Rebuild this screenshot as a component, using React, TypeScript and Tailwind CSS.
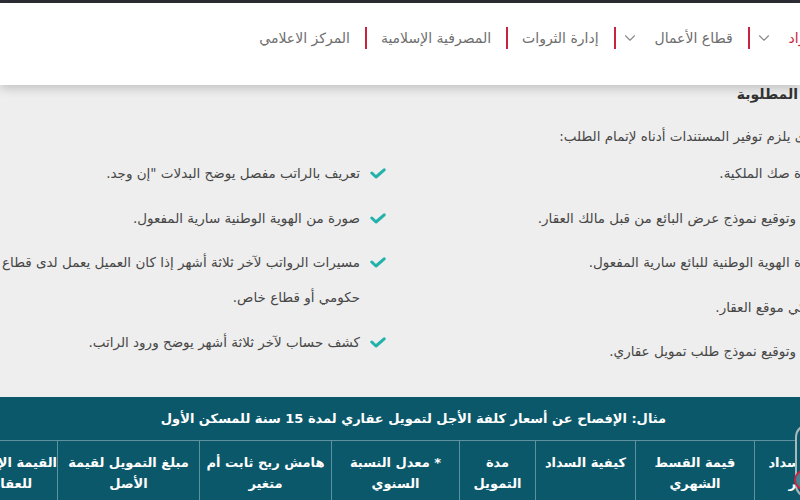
import React from 'react';
import { ChevronDown } from 'lucide-react';

const rightDocs = [
  'صورة صك الملكية.',
  'تعبئة وتوقيع نموذج عرض البائع من قبل مالك العقار.',
  'صورة الهوية الوطنية للبائع سارية المفعول.',
  'كروكي موقع العقار.',
  'تعبئة وتوقيع نموذج طلب تمويل عقاري.',
];

const leftDocs: string[][] = [
  ['تعريف بالراتب مفصل يوضح البدلات "إن وجد.'],
  ['صورة من الهوية الوطنية سارية المفعول.'],
  ['مسيرات الرواتب لآخر ثلاثة أشهر إذا كان العميل يعمل لدى قطاع', 'حكومي أو قطاع خاص.'],
  ['كشف حساب لآخر ثلاثة أشهر يوضح ورود الراتب.'],
];

const columns = [
  { title: ['تاريخ السداد', 'الأخير'], width: 'w-[105px]' },
  { title: ['قيمة القسط', 'الشهري'], width: 'w-[119px]' },
  { title: ['كيفية السداد'], width: 'w-[100px]' },
  { title: ['مدة', 'التمويل'], width: 'w-[76px]' },
  { title: ['* معدل النسبة', 'السنوي'], width: 'w-[128px]' },
  { title: ['هامش ربح ثابت أم', 'متغير'], width: 'w-[132px]' },
  { title: ['مبلغ التمويل لقيمة', 'الأصل'], width: 'w-[142px]' },
  { title: ['القيمة الإجمالية', 'للعقار'], width: 'w-[90px]' },
];

const CheckMark = () => (
  <svg width="16" height="11" viewBox="0 0 16 11" className="shrink-0 mt-[12px]">
    <polyline
      points="1.8,5 6,9 14.2,1.8"
      fill="none"
      stroke="#23b1ab"
      strokeWidth="3"
      strokeLinecap="round"
      strokeLinejoin="round"
    />
  </svg>
);

const Divider = ({ afterChevron }: { afterChevron?: boolean }) => (
  <span className={`w-[2px] h-[22px] bg-[#c9243f] ml-[15px] ${afterChevron ? 'mr-[5px]' : 'mr-[14px]'}`} />
);

const Chevron = () => (
  <ChevronDown className="w-[18px] h-[18px] text-[#8a8a8a] mr-[16px]" strokeWidth={1.5} />
);

export default function App() {
  return (
    <div
      dir="rtl"
      className="w-[800px] h-[500px] overflow-hidden bg-[#eeeeee] relative font-['DejaVu_Sans',sans-serif]"
    >
      <div className="h-[3px] bg-[#2c2e35]" />

      <header className="h-[82px] bg-white relative z-10 shadow-[0_3px_10px_rgba(0,0,0,0.2)]">
        <nav className="flex items-center mr-[-25px] pt-[24px] text-[14px] text-[#6e6e6e] whitespace-nowrap">
          <span className="text-[#c9243f]">الأفراد</span>
          <Chevron />
          <Divider afterChevron />
          <span>قطاع الأعمال</span>
          <Chevron />
          <Divider afterChevron />
          <span>إدارة الثروات</span>
          <Divider />
          <span>المصرفية الإسلامية</span>
          <Divider />
          <span>المركز الاعلامي</span>
        </nav>
      </header>

      <main className="text-[#474747] text-[13.5px]">
        <h3 className="mr-[-75px] font-bold text-[14px] text-[#333] leading-[18px] whitespace-nowrap">
          المستندات المطلوبة
        </h3>

        <p className="mr-[-78px] mt-[16px] leading-[35px] whitespace-nowrap">
          الحالات الأخرى يلزم توفير المستندات أدناه لإتمام الطلب:
        </p>

        <div className="flex mr-[-56px] mt-[2px]">
          <ul className="w-[466px] shrink-0">
            {rightDocs.map((doc) => (
              <li key={doc} className="flex items-start pr-[4px] mb-[9.5px]">
                <CheckMark />
                <span className="mr-[10px] leading-[35px] whitespace-nowrap">{doc}</span>
              </li>
            ))}
          </ul>
          <ul className="flex-1">
            {leftDocs.map((lines) => (
              <li key={lines[0]} className="flex items-start pr-[4px] mb-[9.5px]">
                <CheckMark />
                <span className="mr-[10px] leading-[35px]">
                  {lines.map((line) => (
                    <span key={line} className="block whitespace-nowrap">
                      {line}
                    </span>
                  ))}
                </span>
              </li>
            ))}
          </ul>
        </div>

        <table className="mr-[-60px] mt-[18px] table-fixed border-collapse bg-[#0b586a] text-white w-[892px]">
          <colgroup>
            {columns.map((c) => (
              <col key={c.title[0]} className={c.width} />
            ))}
          </colgroup>
          <thead>
            <tr>
              <th colSpan={8} className="h-[44px] text-center text-[13px] font-bold border-b border-[#5f91a0]">
                مثال: الإفصاح عن أسعار كلفة الأجل لتمويل عقاري لمدة 15 سنة للمسكن الأول
              </th>
            </tr>
            <tr>
              {columns.map((c) => (
                <th
                  key={c.title[0]}
                  className="align-top pt-[11px] pb-[20px] border-x border-[#5f91a0] text-[13px] font-bold leading-[21px] text-center"
                >
                  {c.title.map((t) => (
                    <span key={t} className="block whitespace-nowrap">
                      {t}
                    </span>
                  ))}
                </th>
              ))}
            </tr>
          </thead>
        </table>
      </main>

      <div className="absolute left-[795px] top-[424px] w-[26px] h-[74px] rounded-[13px] border-2 border-[#a7b9bd] bg-[#0b586a]">
        <span className="absolute top-[44px] left-[-3px] w-[20px] h-[20px] rounded-full border-2 border-[#c9243f] bg-[#3f8593]" />
      </div>
    </div>
  );
}
